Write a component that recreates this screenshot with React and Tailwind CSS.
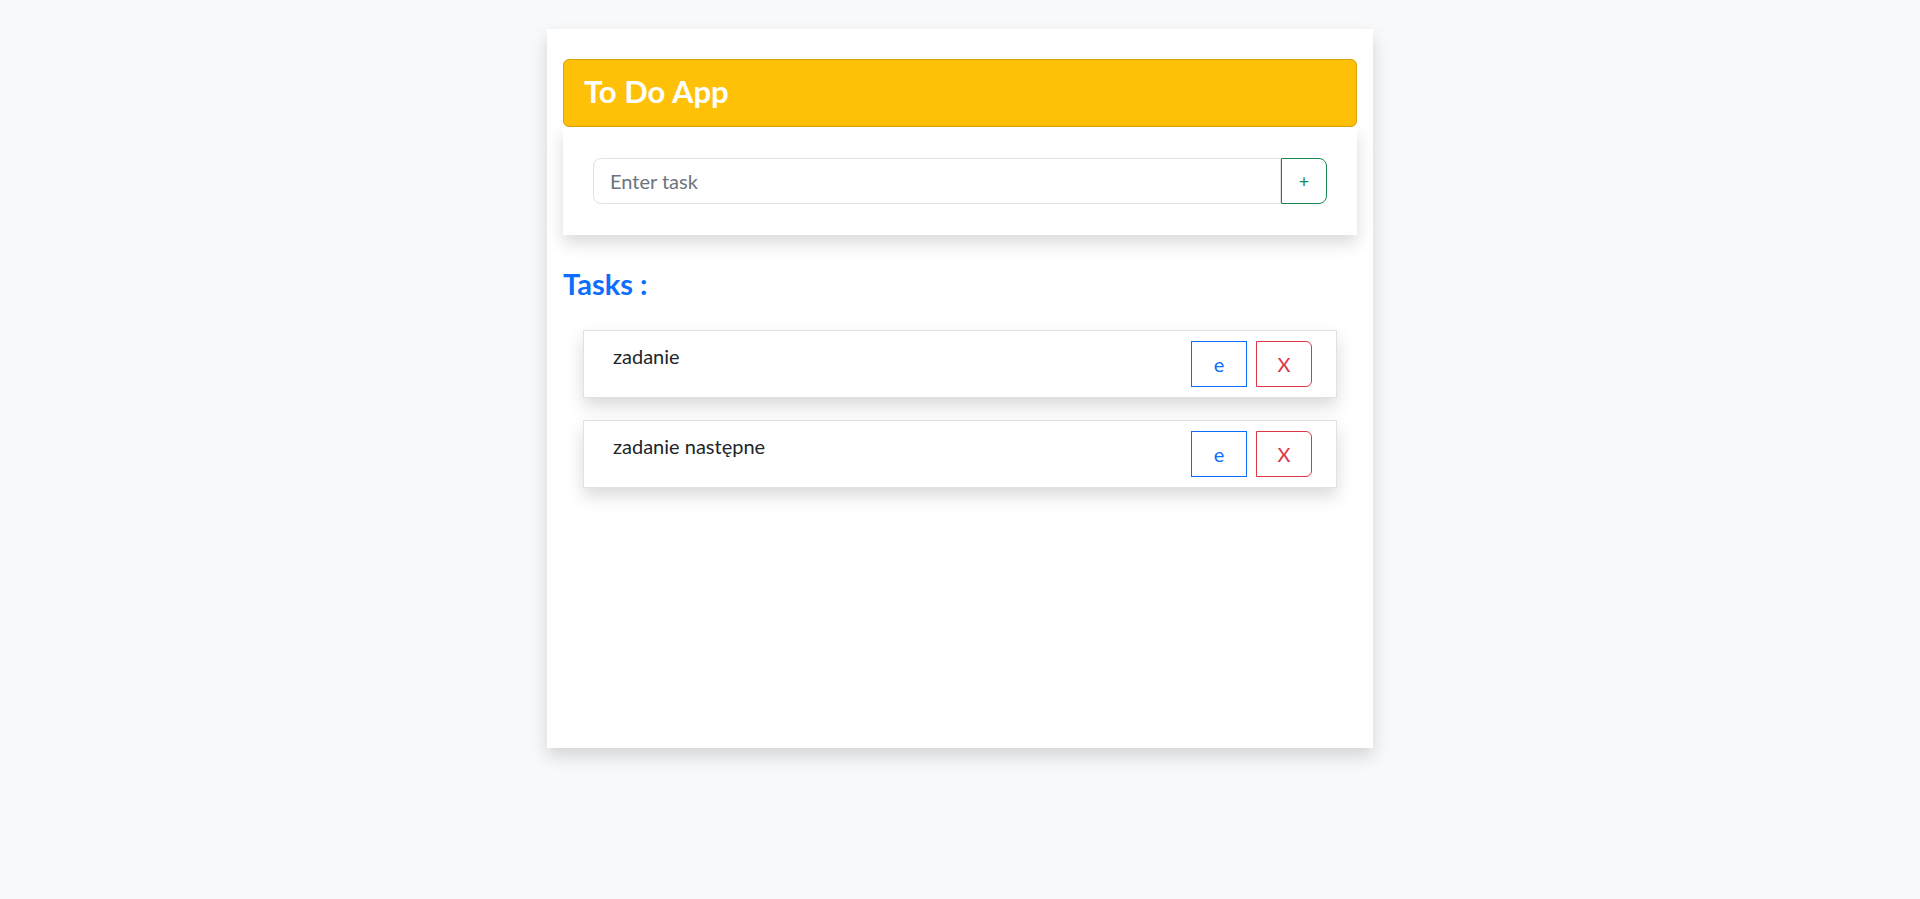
import React, { useState } from "react";

const TaskItem = ({ text }) => {
  return (
    <div className="mx-5 mb-[22px] flex items-start justify-between border border-[#dee2e6] bg-white py-[10px] pl-[29px] pr-[24px] shadow-[0_8px_16px_rgba(0,0,0,0.15)]">
      <span className="text-[20px] leading-[30px] text-[#212529]">{text}</span>
      <div className="flex gap-[9px]">
        <button className="h-[46px] w-[56px] rounded-none border border-[#0d6efd] bg-white text-[20px] text-[#0d6efd]">
          e
        </button>
        <button className="h-[46px] w-[56px] rounded-r-md border border-[#dc3545] bg-white text-[20px] text-[#dc3545]">
          X
        </button>
      </div>
    </div>
  );
};

const App = () => {
  const [task, setTask] = useState("");
  const tasks = ["zadanie", "zadanie następne"];

  return (
    <div
      className="min-h-screen bg-[#f8f9fa] pt-[29px]"
      style={{ fontFamily: "Lato, 'Liberation Sans', sans-serif" }}
    >
      <div className="mx-auto min-h-[719px] w-[826px] bg-white px-4 pt-[30px] shadow-[0_8px_16px_rgba(0,0,0,0.15)]">
        <div className="flex h-[68px] items-center rounded-md border border-[#d9a406] bg-[#ffc107] px-5 pb-1">
          <h2 className="text-[31px] font-bold leading-tight text-white">To Do App</h2>
        </div>

        <div className="bg-white px-[30px] py-[31px] shadow-[0_8px_16px_rgba(0,0,0,0.15)]">
          <div className="flex">
            <input
              value={task}
              onChange={(e) => setTask(e.target.value)}
              placeholder="Enter task"
              className="h-[46px] flex-1 rounded-l-lg border border-[#dee2e6] px-4 text-[20px] text-[#212529] outline-none placeholder:text-[#6c757d]"
            />
            <button className="h-[46px] w-[46px] rounded-r-lg border border-[#198754] bg-white text-[18px] text-[#198754]">
              +
            </button>
          </div>
        </div>

        <h3 className="mt-8 mb-[28px] text-[29px] font-bold leading-[1.2] text-[#0d6efd]">Tasks :</h3>

        {tasks.map((t) => (
          <TaskItem key={t} text={t} />
        ))}
      </div>
    </div>
  );
};

export default App;
